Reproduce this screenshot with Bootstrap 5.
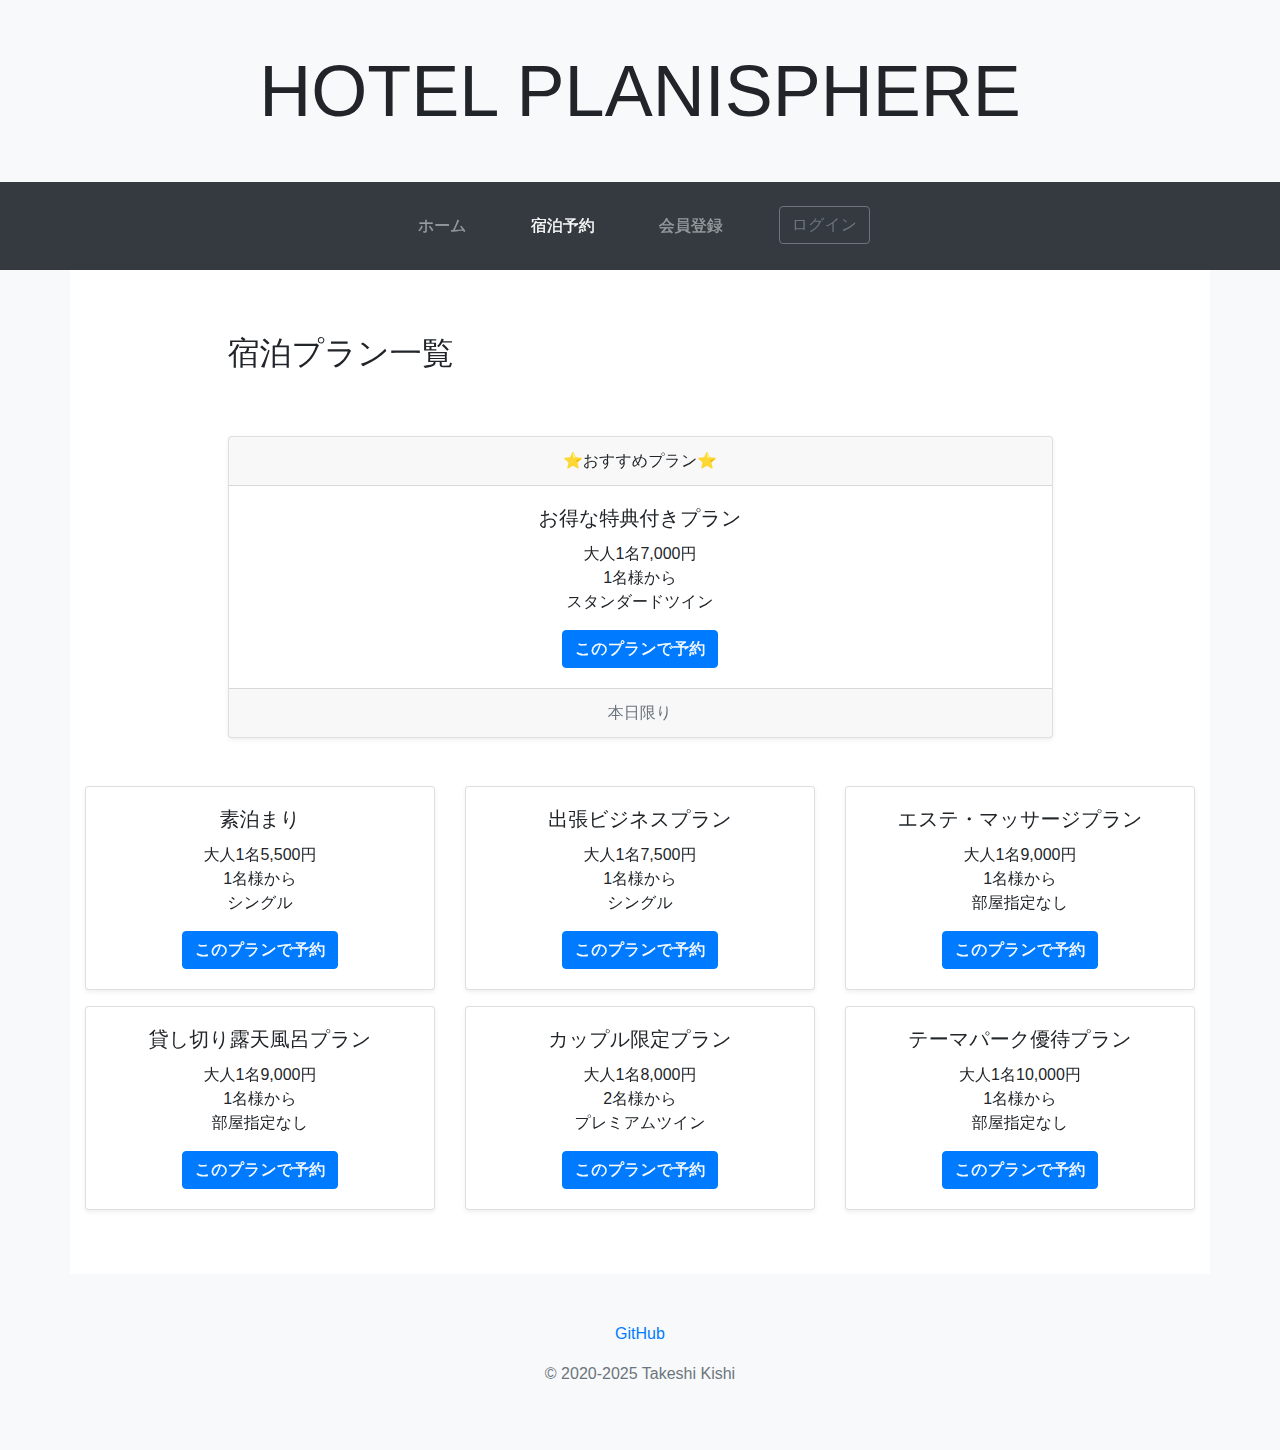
<!DOCTYPE html>
<html lang="ja">
<head>
<meta charset="utf-8">
<meta name="viewport" content="width=device-width, initial-scale=1">
<title>HOTEL PLANISPHERE</title>
<link rel="stylesheet" href="https://cdn.jsdelivr.net/npm/bootstrap@5.3.0/dist/css/bootstrap.min.css">
<style>
body { font-family: "Liberation Sans", "WenQuanYi Zen Hei", "Noto Sans CJK JP", sans-serif; color: #212529; background: #f8f9fa; line-height: 1.5; }
.site-title { font-size: 72px; font-weight: 300; line-height: 86px; padding: 48px 0; margin: 0; }
.site-nav { background: #343a40; height: 88px; padding: 8px 16px; }
.site-nav .nav-link { color: #999da0; padding: 8px; }
.site-nav .nav-link.active { color: #fff; }
.btn-login { --bs-btn-color: #6c757d; --bs-btn-border-color: #6c757d; --bs-btn-border-radius: .25rem; margin-bottom: 2px; }
.page-box { width: 1140px; background: #fff; padding: 64px 15px 48px; }
.page-title { font-size: 32px; font-weight: 500; line-height: 38px; margin: 0 0 64px; }
.recommend { width: 825px; }
.plan-row { --bs-gutter-x: 30px; }
.plan { --bs-card-border-color: rgba(0,0,0,.125); --bs-card-border-radius: 4px; --bs-card-inner-border-radius: 3px; --bs-card-spacer-x: 20px; --bs-card-spacer-y: 20px; --bs-card-cap-padding-y: 12px; --bs-card-title-spacer-y: 12px; text-align: center; }
.plan .card-title { font-size: 20px; line-height: 24px; font-weight: 500; }
.plan ul { list-style: none; padding: 0; margin: 0 0 16px; }
.btn-plan { --bs-btn-bg: #007bff; --bs-btn-border-color: #007bff; --bs-btn-color: #fff; --bs-btn-border-radius: .25rem; }
.foot-link { color: #007bff; text-decoration: none; }
.foot-note { color: #6c757d; }
.text-heavy { font-weight: 700; -webkit-text-stroke: .35px currentColor; }
</style>
</head>
<body>
<header>
<h1 class="site-title text-center">HOTEL PLANISPHERE</h1>
<nav class="site-nav navbar navbar-expand justify-content-center">
<ul class="navbar-nav align-items-center">
<li class="nav-item mx-4"><a class="nav-link text-heavy" href="#">ホーム</a></li>
<li class="nav-item mx-4"><a class="nav-link active text-heavy" href="#">宿泊予約</a></li>
<li class="nav-item mx-4"><a class="nav-link text-heavy" href="#">会員登録</a></li>
<li class="nav-item mx-4"><a class="btn btn-outline-secondary btn-login" href="#">ログイン</a></li>
</ul>
</nav>
</header>
<main class="page-box mx-auto">
<div class="recommend mx-auto mb-5">
<h2 class="page-title">宿泊プラン一覧</h2>
<div class="card plan shadow-sm">
<div class="card-header">⭐おすすめプラン⭐</div>
<div class="card-body"><h5 class="card-title">お得な特典付きプラン</h5><ul><li>大人1名7,000円</li><li>1名様から</li><li>スタンダードツイン</li></ul><a href="#" class="btn btn-plan text-heavy">このプランで予約</a></div>
<div class="card-footer foot-note">本日限り</div>
</div>
</div>
<div class="row plan-row">
<div class="col-4"><div class="card plan shadow-sm mb-3"><div class="card-body"><h5 class="card-title">素泊まり</h5><ul><li>大人1名5,500円</li><li>1名様から</li><li>シングル</li></ul><a href="#" class="btn btn-plan text-heavy">このプランで予約</a></div></div></div>
<div class="col-4"><div class="card plan shadow-sm mb-3"><div class="card-body"><h5 class="card-title">出張ビジネスプラン</h5><ul><li>大人1名7,500円</li><li>1名様から</li><li>シングル</li></ul><a href="#" class="btn btn-plan text-heavy">このプランで予約</a></div></div></div>
<div class="col-4"><div class="card plan shadow-sm mb-3"><div class="card-body"><h5 class="card-title">エステ・マッサージプラン</h5><ul><li>大人1名9,000円</li><li>1名様から</li><li>部屋指定なし</li></ul><a href="#" class="btn btn-plan text-heavy">このプランで予約</a></div></div></div>
<div class="col-4"><div class="card plan shadow-sm mb-3"><div class="card-body"><h5 class="card-title">貸し切り露天風呂プラン</h5><ul><li>大人1名9,000円</li><li>1名様から</li><li>部屋指定なし</li></ul><a href="#" class="btn btn-plan text-heavy">このプランで予約</a></div></div></div>
<div class="col-4"><div class="card plan shadow-sm mb-3"><div class="card-body"><h5 class="card-title">カップル限定プラン</h5><ul><li>大人1名8,000円</li><li>2名様から</li><li>プレミアムツイン</li></ul><a href="#" class="btn btn-plan text-heavy">このプランで予約</a></div></div></div>
<div class="col-4"><div class="card plan shadow-sm mb-3"><div class="card-body"><h5 class="card-title">テーマパーク優待プラン</h5><ul><li>大人1名10,000円</li><li>1名様から</li><li>部屋指定なし</li></ul><a href="#" class="btn btn-plan text-heavy">このプランで予約</a></div></div></div>
</div>
</main>
<footer class="py-5 text-center">
<p class="mb-3"><a class="foot-link" href="#">GitHub</a></p>
<p class="foot-note mb-0">© 2020-2025 Takeshi Kishi</p>
</footer>
<script src="https://cdn.jsdelivr.net/npm/bootstrap@5.3.0/dist/js/bootstrap.bundle.min.js"></script>
</body>
</html>
